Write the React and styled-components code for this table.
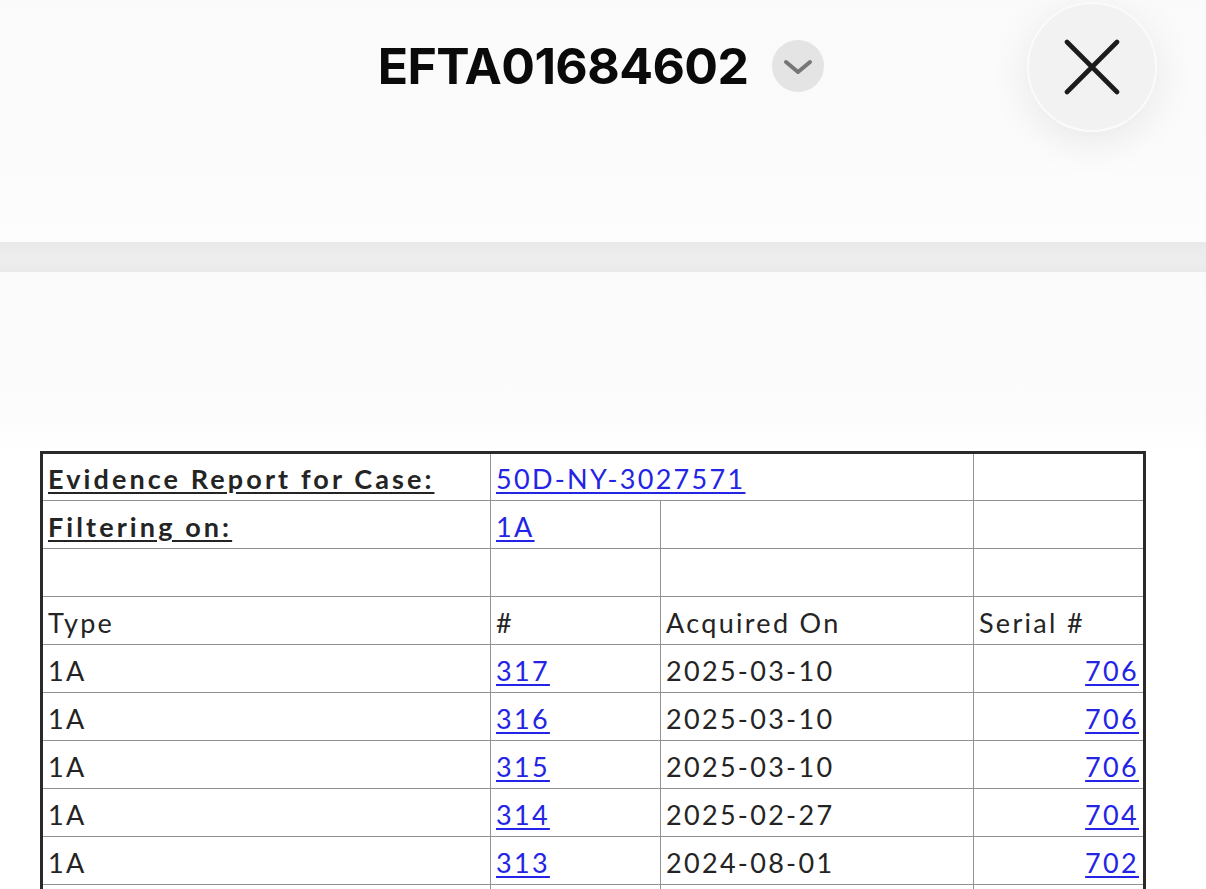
import React from 'react';
import styled, { createGlobalStyle } from 'styled-components';

const GlobalStyle = createGlobalStyle`
  html, body {
    margin: 0;
    padding: 0;
    background: #ffffff;
    overflow: hidden;
  }
`;

const rows = [
  { type: '1A', num: '317', date: '2025-03-10', serial: '706' },
  { type: '1A', num: '316', date: '2025-03-10', serial: '706' },
  { type: '1A', num: '315', date: '2025-03-10', serial: '706' },
  { type: '1A', num: '314', date: '2025-02-27', serial: '704' },
  { type: '1A', num: '313', date: '2024-08-01', serial: '702' },
];

const App = () => (
  <Screen>
    <GlobalStyle />
    <Header>
      <TitleRow>
        <Title>EFTA01684602</Title>
        <ChevronButton>
          <svg width="30" height="16" viewBox="0 0 30 16" fill="none">
            <path d="M3 3l12 10 12-10" stroke="#767676" strokeWidth="4" strokeLinecap="round" strokeLinejoin="round" />
          </svg>
        </ChevronButton>
      </TitleRow>
      <CloseButton>
        <svg width="56" height="56" viewBox="0 0 56 56" fill="none">
          <path d="M3 3l50 50M53 3L3 53" stroke="#1c1c1c" strokeWidth="4.6" strokeLinecap="round" />
        </svg>
      </CloseButton>
    </Header>
    <Divider />
    <Page>
      <Sheet>
        <colgroup>
          <col style={{ width: 449 }} />
          <col style={{ width: 170 }} />
          <col style={{ width: 313 }} />
          <col style={{ width: 171 }} />
        </colgroup>
        <tbody>
          <tr>
            <Cell><Label>Evidence Report for Case:</Label></Cell>
            <Cell colSpan={2}><Link>50D-NY-3027571</Link></Cell>
            <Cell />
          </tr>
          <tr>
            <Cell><Label>Filtering on:</Label></Cell>
            <Cell><Link>1A</Link></Cell>
            <Cell />
            <Cell />
          </tr>
          <tr>
            <Cell />
            <Cell />
            <Cell />
            <Cell />
          </tr>
          <tr>
            <Cell>Type</Cell>
            <Cell>#</Cell>
            <Cell>Acquired On</Cell>
            <Cell>Serial #</Cell>
          </tr>
          {rows.map((r) => (
            <tr key={r.num}>
              <Cell>{r.type}</Cell>
              <Cell><Link>{r.num}</Link></Cell>
              <Cell>{r.date}</Cell>
              <Cell $right><Link>{r.serial}</Link></Cell>
            </tr>
          ))}
          {/* next row falls below the fold, only its grid shows */}
          <tr>
            <Cell />
            <Cell />
            <Cell />
            <Cell />
          </tr>
        </tbody>
      </Sheet>
    </Page>
  </Screen>
);

const Screen = styled.div`
  width: 1206px;
  height: 889px;
  overflow: hidden;
  display: flex;
  flex-direction: column;
  background: #fefefe;
`;

const Header = styled.header`
  position: relative;
  height: 242px;
  flex-shrink: 0;
  background: linear-gradient(#fafafa 0%, #fbfbfb 55%, #fdfdfd 100%);
`;

const TitleRow = styled.div`
  display: flex;
  align-items: center;
  justify-content: center;
  gap: 24px;
  height: 132px;
  padding-right: 4px;
`;

const Title = styled.h1`
  margin: 0;
  font-family: Inter, 'Noto Sans', sans-serif;
  font-weight: 700;
  font-size: 50px;
  letter-spacing: -0.6px;
  color: #0a0a0a;
`;

const ChevronButton = styled.div`
  width: 52px;
  height: 52px;
  border-radius: 50%;
  background: #e4e4e4;
  display: flex;
  align-items: center;
  justify-content: center;
  padding-top: 2px;
  box-sizing: border-box;
`;

const CloseButton = styled.div`
  position: absolute;
  top: 2px;
  right: 49px;
  width: 130px;
  height: 130px;
  border-radius: 50%;
  background: #f2f2f2;
  border: 2px solid #fbfbfb;
  box-sizing: border-box;
  box-shadow: 0 10px 40px rgba(0, 0, 0, 0.08);
  display: flex;
  align-items: center;
  justify-content: center;
`;

const Divider = styled.div`
  height: 30px;
  flex-shrink: 0;
  background: linear-gradient(#e9e9e9, #ededed 60%, #eaeaea);
`;

const Page = styled.main`
  flex: 1;
  padding: 179px 0 0 40px;
  background: linear-gradient(#fbfbfb 0px, #fcfcfc 140px, #ffffff 180px);
`;

const Sheet = styled.table`
  width: 1103px;
  table-layout: fixed;
  border-collapse: collapse;
  border: 3px solid #2a2a2a;
  font-family: Lato, 'Open Sans', sans-serif;
  font-size: 27px;
  letter-spacing: 2.3px;
  color: #242424;
  background: #ffffff;

  tr {
    height: 48px;
  }
`;

const Cell = styled.td`
  border: 1.5px solid #939393;
  padding: 0 ${(p) => (p.$right ? '4px' : '2px')} 6px 5px;
  vertical-align: bottom;
  line-height: 30px;
  white-space: nowrap;
  overflow: visible;
  text-align: ${(p) => (p.$right ? 'right' : 'left')};
`;

const Label = styled.span`
  font-weight: 700;
  letter-spacing: 3.1px;
  text-decoration: underline;
  text-underline-offset: 3px;
`;

const Link = styled.span`
  color: #2424e4;
  text-decoration: underline;
  text-underline-offset: 3px;
`;

export default App;
